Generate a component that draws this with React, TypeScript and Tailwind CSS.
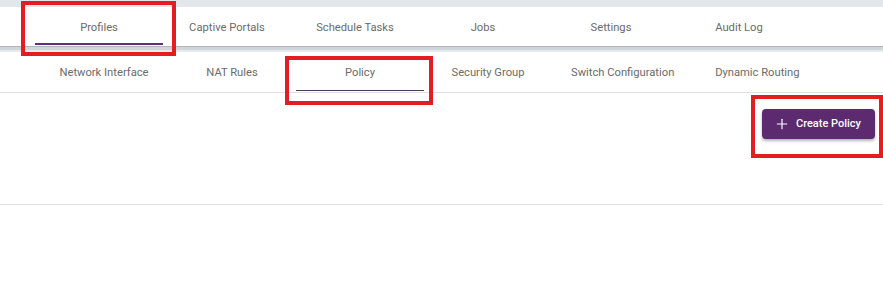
import { Plus } from "lucide-react";

const mainTabs = ["Profiles", "Captive Portals", "Schedule Tasks", "Jobs", "Settings", "Audit Log"];
const subTabs = [
  "Network Interface",
  "NAT Rules",
  "Policy",
  "Security Group",
  "Switch Configuration",
  "Dynamic Routing",
];

const App = () => {
  return (
    <div className="relative w-[883px] h-[288px] bg-white font-['Roboto',sans-serif] overflow-hidden">
      {/* top strip */}
      <div className="h-[7px] bg-[#e3e6ea]" />

      {/* main tabs */}
      <div className="h-[39px] flex pl-[35px] bg-white">
        {mainTabs.map((tab, i) => (
          <div
            key={tab}
            className="relative w-[128px] flex items-center justify-center text-[11.2px] text-[#6b6b6b]"
          >
            <span className="mt-[3px]">{tab}</span>
            {i === 0 && <div className="absolute left-0 right-0 bottom-[1px] h-[2px] bg-[#5e2b7e]" />}
          </div>
        ))}
      </div>
      <div className="h-[1px] bg-[#aeb6bc]" />
      <div className="h-[3px] bg-[#cfd5d9]" />
      <div className="h-[2px] bg-[#e8ebee]" />

      {/* sub tabs */}
      <div className="h-[41px] flex pl-[40px] bg-white border-b border-[#e0e0e0]">
        {subTabs.map((tab) => (
          <div
            key={tab}
            className="relative min-w-[128px] px-[19px] flex items-center justify-center text-[11.2px] text-[#6b6b6b]"
          >
            <span className="mt-[2px]">{tab}</span>
            {tab === "Policy" && <div className="absolute left-0 right-0 bottom-[1px] h-[1px] bg-[#4f3a5e]" />}
          </div>
        ))}
      </div>

      {/* content */}
      <div className="h-[112px] flex justify-end items-start pt-[16px] pr-[8px] border-b border-[#e0e0e0]">
        <button className="h-[30px] w-[113px] flex items-center justify-center gap-[6px] pr-[2px] rounded-[4px] bg-[#5b2a6f] text-white text-[11px] font-medium shadow-[0_2px_3px_rgba(0,0,0,0.3)]">
          <Plus className="w-[16px] h-[16px]" strokeWidth={1.75} />
          <span>Create Policy</span>
        </button>
      </div>

      {/* annotation boxes */}
      <div className="absolute left-[21px] top-[1px] w-[155px] h-[55px] border-4 border-[#e41e20]" />
      <div className="absolute left-[285px] top-[56px] w-[148px] h-[49px] border-4 border-[#e41e20]" />
      <div className="absolute left-[751px] top-[95px] w-[132px] h-[63px] border-4 border-[#e41e20]" />
    </div>
  );
};

export default App;
